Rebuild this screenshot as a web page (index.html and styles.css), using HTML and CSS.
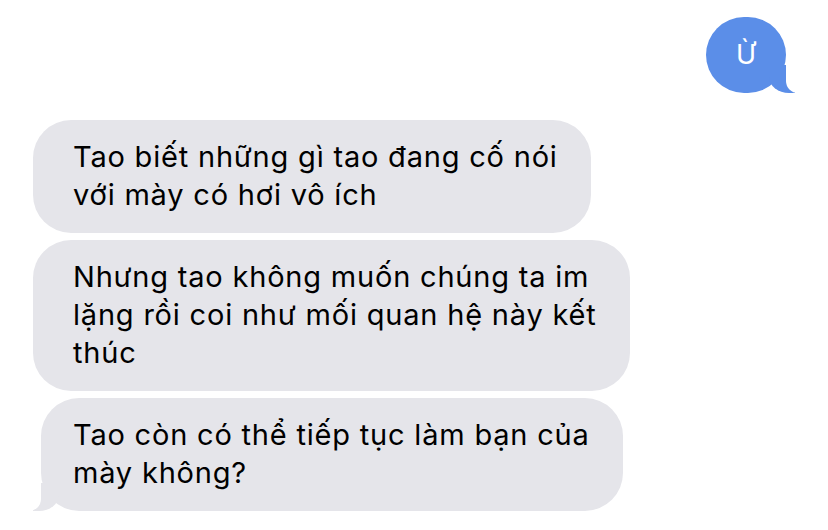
FILE: index.html
```html
<!DOCTYPE html>
<html lang="vi">
<head>
    <meta charset="UTF-8" />
    <meta name="viewport" content="width=device-width, initial-scale=1.0"/>
    <title>Tin nhắn</title>
    <link rel="stylesheet" href="styles.css">
</head>
<body>

    <div class="thread">
        <div class="bubble from-me tail">Ừ</div>

        <div class="bubble from-them">Tao biết những gì tao đang cố nói<br>với mày có hơi vô ích</div>
        <div class="bubble from-them">Nhưng tao không muốn chúng ta im<br>lặng rồi coi như mối quan hệ này kết<br>thúc</div>
        <div class="bubble from-them tail last">Tao còn có thể tiếp tục làm bạn của<br>mày không?</div>
    </div>

</body>
</html>
```

FILE: styles.css
```css
* {
    box-sizing: border-box;
    margin: 0;
    padding: 0;
}

body {
    background: #fff;
    font-family: Inter, 'Noto Sans', sans-serif;
    overflow: hidden;
}

.thread {
    display: flex;
    flex-direction: column;
    align-items: flex-start;
    gap: 7px;
    padding: 17px 42px 0 33px;
}

.bubble {
    position: relative;
    font-size: 29px;
    line-height: 38px;
    letter-spacing: 0.8px;
    color: #000;
    border-radius: 38px;
}

.from-me {
    align-self: flex-end;
    background: #5b8ee8;
    color: #fff;
    width: 80px;
    height: 76px;
    display: flex;
    align-items: center;
    justify-content: center;
    font-size: 27px;
    letter-spacing: 0;
    margin-bottom: 20px;
}

.from-them {
    background: #e5e5ea;
    padding: 18px 33px 19px 40px;
}

.from-them.last {
    margin-left: 8px;
    padding-left: 32px;
}

/* bubble tails */
.tail::before,
.tail::after {
    content: "";
    position: absolute;
    bottom: 0;
    height: 28px;
}

.from-me.tail::before {
    right: -9px;
    width: 26px;
    background: #5b8ee8;
    border-bottom-left-radius: 20px 16px;
}

.from-me.tail::after {
    right: -30px;
    width: 30px;
    background: #fff;
    border-bottom-left-radius: 12px;
}

.from-them.tail::before {
    left: -8px;
    width: 26px;
    background: #e5e5ea;
    border-bottom-right-radius: 20px 16px;
}

.from-them.tail::after {
    left: -30px;
    width: 30px;
    background: #fff;
    border-bottom-right-radius: 12px;
}
```
